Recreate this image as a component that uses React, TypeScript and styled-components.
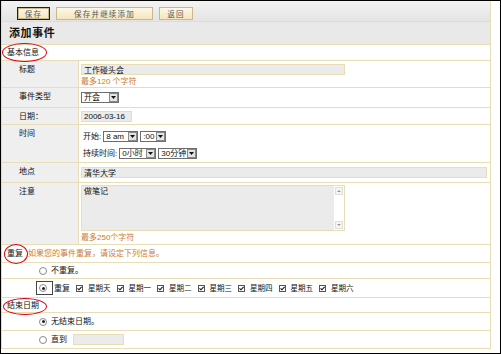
import React from "react";
import styled, { createGlobalStyle } from "styled-components";

const TAN = "#e8ddb5";
const ORANGE = "#cf7b2e";
const FONT = `"Liberation Sans", "Noto Sans CJK SC", sans-serif`;

const Global = createGlobalStyle`
  html, body { margin: 0; padding: 0; background: #fff; }
  body { font-family: ${FONT}; font-size: 8px; line-height: 9px; color: #111; }
  * { box-sizing: border-box; }
`;

const Frame = styled.div`
  width: 501px;
  height: 354px;
  border: 1px solid #000;
  background: #fff;
  overflow: hidden;
`;

const Page = styled.div`
  width: 490px;
  height: 348px;
  border-left: 1px solid ${TAN};
  border-right: 1px solid ${TAN};
  border-bottom: 1px solid ${TAN};
  display: flex;
  flex-direction: column;
`;

const Toolbar = styled.div`
  height: 21px;
  flex: none;
  display: flex;
  align-items: flex-start;
  gap: 6px;
  padding: 6px 0 0 15px;
  background: linear-gradient(#f3f3f3, #e4e4e4);
  border-bottom: 1px solid ${TAN};
`;

const Button = styled.button<{ $w: number; $focus?: boolean }>`
  width: ${(p) => p.$w}px;
  height: 13px;
  padding: 0;
  margin: 0;
  font-family: ${FONT};
  font-size: 7.5px;
  letter-spacing: 1.2px;
  color: #555;
  background: linear-gradient(#fdf7e6, #f4e6bf);
  border: 1px solid ${(p) => (p.$focus ? "#222" : "#c9b88a")};
  box-shadow: ${(p) => (p.$focus ? "inset 0 0 0 1px #c9b88a" : "none")};
  display: flex;
  align-items: center;
  justify-content: center;
`;

const TitleBar = styled.div`
  height: 23px;
  flex: none;
  background: #e9e9e9;
  border-bottom: 1px solid ${TAN};
  display: flex;
  align-items: center;
  padding: 1px 0 0 7px;
  font-size: 11px;
  font-weight: bold;
  letter-spacing: 0.6px;
  color: #111;
`;

const SectionHeader = styled.div<{ $h: number }>`
  position: relative;
  height: ${(p) => p.$h}px;
  flex: none;
  display: flex;
  align-items: center;
  gap: 5px;
  padding-left: 5px;
  background: #fff;
  border-bottom: 1px solid ${TAN};
  color: #111;
`;

const Hint = styled.span`
  color: ${ORANGE};
`;

const Ellipse = styled.span<{ $l: number; $t: number; $w: number; $h: number }>`
  position: absolute;
  left: ${(p) => p.$l}px;
  top: ${(p) => p.$t}px;
  width: ${(p) => p.$w}px;
  height: ${(p) => p.$h}px;
  border: 1.5px solid #e00010;
  border-radius: 50%;
  z-index: 2;
  pointer-events: none;
`;

const FieldRow = styled.div<{ $h: number }>`
  height: ${(p) => p.$h}px;
  flex: none;
  display: grid;
  grid-template-columns: 77px 1fr;
  border-bottom: 1px solid ${TAN};
`;

const Label = styled.div`
  background: #efefef;
  border-right: 1px solid ${TAN};
  padding: 4px 0 0 17px;
  color: #111;
`;

const Value = styled.div<{ $pt?: number }>`
  padding: ${(p) => p.$pt ?? 3}px 0 0 2px;
  display: flex;
  flex-direction: column;
  align-items: flex-start;
  gap: 1px;
`;

const TextInput = styled.input<{ $w: number; $ml?: number }>`
  width: ${(p) => p.$w}px;
  height: 11px;
  margin: 0 0 0 ${(p) => p.$ml ?? 0}px;
  padding: 0 2px;
  font-family: ${FONT};
  font-size: 8px;
  color: #111;
  background: #ebebeb;
  border: 1px solid ${TAN};
  outline: none;
`;

const OrangeNote = styled.div`
  color: ${ORANGE};
  margin-top: 1px;
`;

const SelectBox = styled.div<{ $w: number }>`
  width: ${(p) => p.$w}px;
  height: 11px;
  border: 1px solid #6e6e6e;
  background: #fff;
  display: flex;
  align-items: center;
  justify-content: space-between;
  padding: 0 0 0 2px;
  color: #111;
`;

const SelectArrow = styled.span`
  width: 9px;
  height: 9px;
  background: #e4e4e4;
  border: 1px solid #8a8a8a;
  display: flex;
  align-items: center;
  justify-content: center;
`;

const InlineLine = styled.div`
  display: flex;
  align-items: center;
  gap: 2px;
  padding-left: 2px;
`;

const TimeStack = styled.div`
  display: flex;
  flex-direction: column;
  gap: 6px;
`;

const TextAreaBox = styled.div`
  width: 264px;
  height: 46px;
  border: 1px solid ${TAN};
  display: flex;
`;

const TextArea = styled.textarea`
  flex: 1;
  margin: 0;
  padding: 1px 2px;
  border: none;
  resize: none;
  background: #ebebeb;
  font-family: ${FONT};
  font-size: 8px;
  line-height: 9px;
  color: #111;
  outline: none;
`;

const ScrollTrack = styled.div`
  width: 10px;
  background: #fff;
  display: flex;
  flex-direction: column;
  justify-content: space-between;
  align-items: center;
  padding: 1px 0;
`;

const ScrollBtn = styled.span`
  width: 8px;
  height: 8px;
  border: 1px solid #ddd;
  background: #f6f6f6;
  display: flex;
  align-items: center;
  justify-content: center;
`;

const OptionRow = styled.div<{ $h: number }>`
  height: ${(p) => p.$h}px;
  flex: none;
  display: flex;
  align-items: center;
  padding-left: 37px;
  border-bottom: 1px solid ${TAN};
  color: #111;
`;

const Radio = styled.span<{ $on?: boolean }>`
  width: 8px;
  height: 8px;
  border-radius: 50%;
  border: 1px solid #8a8a8a;
  background: #fff;
  display: flex;
  align-items: center;
  justify-content: center;
  margin-right: 4px;
  &::after {
    content: "";
    width: 3px;
    height: 3px;
    border-radius: 50%;
    background: ${(p) => (p.$on ? "#222" : "transparent")};
  }
`;

const FocusRing = styled.span`
  border: 1px solid #444;
  padding: 2px 1px 2px 2px;
  margin-left: -3px;
  margin-right: 1px;
  display: flex;
`;

const CheckBox = styled.span`
  width: 7px;
  height: 7px;
  border: 1px solid #555;
  background: #fff;
  display: flex;
  align-items: center;
  justify-content: center;
  margin: 0 5px 0 6px;
`;

const DayName = styled.span`
  font-size: 7.5px;
`;

const Down = () => (
  <svg width="5" height="3" viewBox="0 0 5 3">
    <path d="M0 0h5L2.5 3z" fill="#111" />
  </svg>
);

const Up = () => (
  <svg width="4" height="2" viewBox="0 0 4 2">
    <path d="M0 2h4L2 0z" fill="#999" />
  </svg>
);

const SmallDown = () => (
  <svg width="4" height="2" viewBox="0 0 4 2">
    <path d="M0 0h4L2 2z" fill="#999" />
  </svg>
);

const Tick = () => (
  <svg width="5" height="5" viewBox="0 0 5 5">
    <path d="M0.5 2.3 L2 3.8 L4.6 0.8" stroke="#111" strokeWidth="1.1" fill="none" />
  </svg>
);

const Select = ({ w, children }: { w: number; children: React.ReactNode }) => (
  <SelectBox $w={w}>
    <span>{children}</span>
    <SelectArrow>
      <Down />
    </SelectArrow>
  </SelectBox>
);

const days = ["星期天", "星期一", "星期二", "星期三", "星期四", "星期五", "星期六"];

export default function App() {
  return (
    <>
      <Global />
      <Frame>
        <Page>
          <Toolbar>
            <Button $w={33} $focus>保存</Button>
            <Button $w={97}>保存并继续添加</Button>
            <Button $w={34}>返回</Button>
          </Toolbar>
          <TitleBar>添加事件</TitleBar>
          <SectionHeader $h={16}>
            基本信息
            <Ellipse $l={0} $t={-2} $w={45} $h={19} />
          </SectionHeader>

          <FieldRow $h={27}>
            <Label>标题</Label>
            <Value>
              <TextInput $w={264} readOnly value="工作碰头会" />
              <OrangeNote>最多120 个字符</OrangeNote>
            </Value>
          </FieldRow>

          <FieldRow $h={20}>
            <Label>事件类型</Label>
            <Value $pt={4}>
              <Select w={38}>开会</Select>
            </Value>
          </FieldRow>

          <FieldRow $h={17}>
            <Label>日期：</Label>
            <Value>
              <TextInput $w={51} readOnly value="2006-03-16" />
            </Value>
          </FieldRow>

          <FieldRow $h={38}>
            <Label>时间</Label>
            <Value $pt={6}>
              <TimeStack>
                <InlineLine>
                  开始:
                  <Select w={35}>8 am</Select>
                  <Select w={26}>:00</Select>
                </InlineLine>
                <InlineLine>
                  持续时间:
                  <Select w={37}>0小时</Select>
                  <Select w={39}>30分钟</Select>
                </InlineLine>
              </TimeStack>
            </Value>
          </FieldRow>

          <FieldRow $h={20}>
            <Label>地点</Label>
            <Value $pt={4}>
              <TextInput $w={406} readOnly value="清华大学" />
            </Value>
          </FieldRow>

          <FieldRow $h={62}>
            <Label>注意</Label>
            <Value $pt={2}>
              <TextAreaBox>
                <TextArea readOnly value="做笔记" />
                <ScrollTrack>
                  <ScrollBtn>
                    <Up />
                  </ScrollBtn>
                  <ScrollBtn>
                    <SmallDown />
                  </ScrollBtn>
                </ScrollTrack>
              </TextAreaBox>
              <OrangeNote>最多250个字符</OrangeNote>
            </Value>
          </FieldRow>

          <SectionHeader $h={18}>
            重复
            <Hint>如果您的事件重复，请设定下列信息。</Hint>
            <Ellipse $l={2} $t={-1} $w={24} $h={20} />
          </SectionHeader>

          <OptionRow $h={16}>
            <Radio />
            不重复。
          </OptionRow>

          <OptionRow $h={19}>
            <FocusRing>
              <Radio $on />
            </FocusRing>
            重复
            {days.map((d) => (
              <React.Fragment key={d}>
                <CheckBox>
                  <Tick />
                </CheckBox>
                <DayName>{d}</DayName>
              </React.Fragment>
            ))}
          </OptionRow>

          <SectionHeader $h={15}>
            结束日期
            <Ellipse $l={1} $t={0} $w={44} $h={17} />
          </SectionHeader>

          <OptionRow $h={18}>
            <Radio $on />
            无结束日期。
          </OptionRow>

          <OptionRow $h={18}>
            <Radio />
            直到
            <TextInput $w={51} $ml={6} readOnly value="" />
          </OptionRow>
        </Page>
      </Frame>
    </>
  );
}
